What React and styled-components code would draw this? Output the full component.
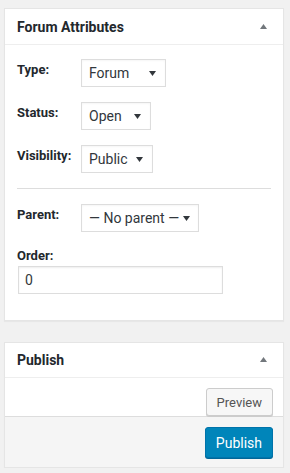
import React from "react"
import styled, { createGlobalStyle } from "styled-components"

const GlobalStyle = createGlobalStyle`
  body {
    margin: 0;
    background: #f1f1f1;
    font-family: Roboto, "Liberation Sans", Arial, sans-serif;
    color: #444;
  }
`

const Caret = ({ up }) => (
  <svg width="7" height="5" viewBox="0 0 7 5">
    <path d={up ? "M0 5 L3.5 0 L7 5 Z" : "M0 0 L7 0 L3.5 5 Z"} fill={up ? "#72777c" : "#32373c"} />
  </svg>
)

const App = () => (
  <Page>
    <GlobalStyle />
    <Box>
      <BoxHeader>
        <BoxTitle>Forum Attributes</BoxTitle>
        <Caret up />
      </BoxHeader>
      <BoxBody>
        <Field>
          <Label>Type:</Label>
          <Select width={85}>
            Forum
            <Caret />
          </Select>
        </Field>
        <Field>
          <Label>Status:</Label>
          <Select width={70}>
            Open
            <Caret />
          </Select>
        </Field>
        <Field>
          <Label>Visibility:</Label>
          <Select width={72}>
            Public
            <Caret />
          </Select>
        </Field>
        <Divider />
        <Field>
          <Label>Parent:</Label>
          <Select width={118} tight>
            — No parent —
            <Caret />
          </Select>
        </Field>
        <Label stacked>Order:</Label>
        <TextInput defaultValue="0" />
      </BoxBody>
    </Box>

    <Box>
      <BoxHeader short>
        <BoxTitle>Publish</BoxTitle>
        <Caret up />
      </BoxHeader>
      <Actions>
        <SecondaryButton type="button">Preview</SecondaryButton>
      </Actions>
      <Footer>
        <PrimaryButton type="button">Publish</PrimaryButton>
      </Footer>
    </Box>
  </Page>
)

const Page = styled.div`
  display: flex;
  flex-direction: column;
  gap: 21px;
  padding: 8px 6px 0 4px;
`

const Box = styled.div`
  background: #fff;
  border: 1px solid #e5e5e5;
  box-shadow: 0 1px 1px rgba(0, 0, 0, 0.04);
`

const BoxHeader = styled.div`
  display: flex;
  align-items: center;
  justify-content: space-between;
  height: ${(p) => (p.short ? 34 : 35)}px;
  padding: 0 16px 0 12px;
  border-bottom: 1px solid #eee;

  svg {
    margin-top: -1px;
  }
`

const BoxTitle = styled.h2`
  margin: 0;
  font-size: 14px;
  font-weight: 700;
  color: #23282d;
`

const BoxBody = styled.div`
  display: flex;
  flex-direction: column;
  padding: 14px 12px 26px;
`

const Field = styled.div`
  display: flex;
  align-items: center;
  margin-bottom: 15px;
`

const Label = styled.div`
  width: 64px;
  flex-shrink: 0;
  font-size: 13px;
  font-weight: 700;
  line-height: 16px;
  color: #23282d;
  margin-top: ${(p) => (p.stacked ? "1px" : "-6px")};
`

const Select = styled.div`
  box-sizing: border-box;
  width: ${(p) => p.width}px;
  height: 28px;
  display: flex;
  align-items: center;
  justify-content: space-between;
  padding: 0 ${(p) => (p.tight ? 8 : 9)}px 0 7px;
  border: 1px solid #ddd;
  box-shadow: inset 0 1px 2px rgba(0, 0, 0, 0.04);
  font-size: 14px;
  color: #32373c;
  white-space: nowrap;
`

const Divider = styled.hr`
  margin: 0 0 15px;
  border: 0;
  border-top: 1px solid #ddd;
`

const TextInput = styled.input`
  box-sizing: border-box;
  width: 205px;
  height: 28px;
  margin: 2px 0 0 1px;
  padding: 0 6px;
  border: 1px solid #ddd;
  box-shadow: inset 0 1px 2px rgba(0, 0, 0, 0.07);
  font-family: inherit;
  font-size: 14px;
  color: #32373c;
  outline: none;
`

const Actions = styled.div`
  display: flex;
  justify-content: flex-end;
  padding: 10px 10px 0;
  height: 28px;
`

const SecondaryButton = styled.button`
  height: 28px;
  padding: 0 10px;
  font-family: inherit;
  font-size: 13px;
  color: #555;
  background: #f7f7f7;
  border: 1px solid #ccc;
  border-radius: 3px;
  box-shadow: 0 1px 0 #ccc;
  cursor: pointer;
`

const Footer = styled.div`
  display: flex;
  justify-content: flex-end;
  padding: 10px 10px 9px;
  background: #f5f5f5;
  border-top: 1px solid #ddd;
`

const PrimaryButton = styled.button`
  height: 31px;
  padding: 0 10px;
  font-family: inherit;
  font-size: 14px;
  color: #fff;
  background: #0085ba;
  border: 1px solid #0073aa;
  border-radius: 3px;
  box-shadow: 0 1px 0 #006799;
  cursor: pointer;
`

export default App
